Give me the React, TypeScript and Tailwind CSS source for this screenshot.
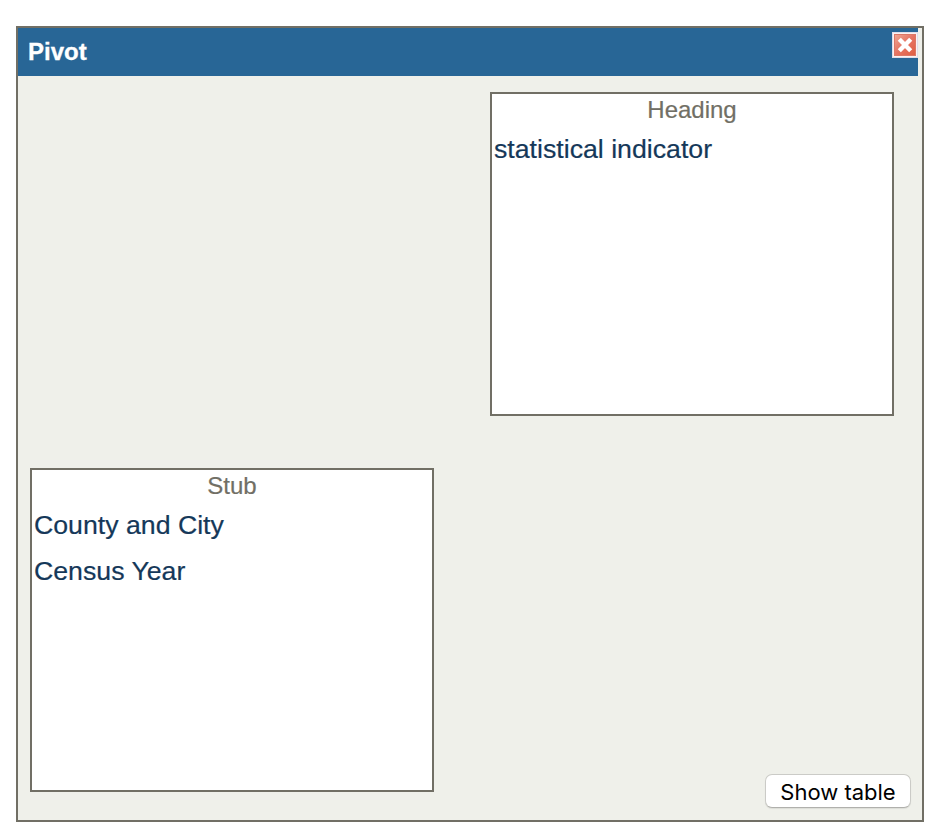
export default function App() {
  return (
    <main className="h-[838px] w-[940px] bg-white pt-[26px] pl-4 font-['Liberation_Sans',Arial,sans-serif]">
      <section className="flex h-[796px] w-[908px] flex-col border-2 border-[#716f65] bg-[#eff0ea]">
        <header className="flex h-12 w-[900px] shrink-0 items-start justify-between bg-[#286696]">
          <h1 className="pt-[6px] pl-[10px] text-[24px] leading-[36px] font-bold text-white [-webkit-text-stroke:0.3px]">Pivot</h1>
          <button aria-label="Close" className="mt-[4px] h-[26px] w-[26px]">
            <svg width="26" height="26" viewBox="0 0 26 26">
              <defs>
                <linearGradient id="closeFill" x1="0" y1="0" x2="1" y2="1">
                  <stop offset="0" stopColor="#f0a592" />
                  <stop offset="0.5" stopColor="#e67362" />
                  <stop offset="1" stopColor="#e05f44" />
                </linearGradient>
              </defs>
              <rect width="26" height="26" fill="#dfdcea" />
              <rect x="1" y="1" width="24" height="24" fill="#fbf1f0" />
              <rect x="2" y="2" width="22" height="22" fill="#dd7767" />
              <rect x="3" y="3" width="20" height="20" fill="url(#closeFill)" />
              <path d="M7.3 7.3L18.7 18.7M18.7 7.3L7.3 18.7" stroke="white" strokeWidth="4.4" />
            </svg>
          </button>
        </header>
        <div className="mt-4 mr-7 h-[324px] w-[404px] shrink-0 self-end border-2 border-[#716f65] bg-white">
          <h2 className="h-[32px] text-center text-[24px] leading-[32px] text-[#716f65] [-webkit-text-stroke:0.2px]">Heading</h2>
          <p className="pl-[2px] text-[26.7px] leading-[46px] text-[#153859] [-webkit-text-stroke:0.2px]">statistical indicator</p>
        </div>
        <div className="mt-[52px] ml-3 flex items-start justify-between">
          <div className="h-[324px] w-[404px] border-2 border-[#716f65] bg-white">
            <h2 className="h-[32px] text-center text-[24px] leading-[32px] text-[#716f65] [-webkit-text-stroke:0.2px]">Stub</h2>
            <p className="pl-[2px] text-[26.7px] leading-[46px] text-[#153859] [-webkit-text-stroke:0.2px]">County and City</p>
            <p className="pl-[2px] text-[26.7px] leading-[46px] text-[#153859] [-webkit-text-stroke:0.2px]">Census Year</p>
          </div>
          <button className="mt-[306px] mr-[11px] h-[34px] w-[146px] rounded-[7px] border border-[#cbcbc7] border-b-[#b0b0ac] bg-white pt-px font-['Inter',sans-serif] text-[22px] leading-[32px] whitespace-nowrap text-black shadow-[0_1px_1px_rgba(0,0,0,0.08)]">Show table</button>
        </div>
      </section>
    </main>
  );
}
